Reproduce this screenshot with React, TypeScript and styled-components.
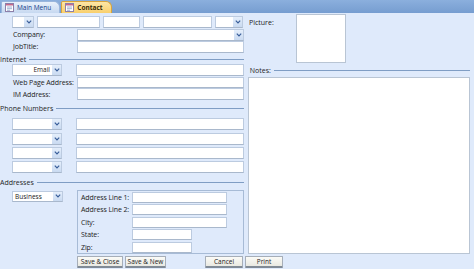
import React from "react"
import styled, {createGlobalStyle} from "styled-components"

const Global = createGlobalStyle`
html, body {
  margin     : 0;
  padding    : 0;
  background : #dfeafb;
  font-family: "Open Sans", "Noto Sans", sans-serif;
  font-size  : 7px;
  color      : #222;
}
`;

const Page = styled.div`
width      : 474px;
height     : 269px;
overflow   : hidden;
background : #dfeafb;
`;

const TabBar = styled.div`
height      : 13px;
background  : linear-gradient(#8bafdd, #769dd0);
display     : flex;
align-items : flex-end;
padding-left: 1px;
box-sizing  : border-box;
`;

const Tab = styled.div<{$active?: boolean}>`
height        : 12px;
display       : flex;
align-items   : center;
gap           : 3px;
padding       : 0 8px 0 3px;
margin-right  : 1px;
box-sizing    : border-box;
border-radius : 2px 6px 0 0;
border        : 1px solid ${p => p.$active ? "#d9a53c" : "#9ab6dc"};
border-bottom : none;
background    : ${p => p.$active ? "linear-gradient(#fde6a6, #f8cf6c)" : "linear-gradient(#e9f1fb, #c6d8f0)"};
color         : ${p => p.$active ? "#3a2c07" : "#15428b"};
font-weight   : ${p => p.$active ? 700 : 400};
font-size     : 6.5px;
`;

const Body = styled.div`
display : flex;
height  : 241px;
`;

const LeftCol = styled.div`
width          : 244px;
display        : flex;
flex-direction : column;
padding-top    : 3px;
box-sizing     : border-box;
`;

const RightCol = styled.div`
width          : 222px;
margin-left    : 4px;
display        : flex;
flex-direction : column;
`;

const Row = styled.div<{$top?: number}>`
height      : 12px;
margin-top  : ${p => p.$top ?? 0}px;
display     : flex;
align-items : stretch;
padding-left: 12px;
gap         : 3px;
`;

const Label = styled.div<{$w?: number}>`
width         : ${p => p.$w ?? 61}px;
padding-left  : 1px;
display       : flex;
align-items   : center;
white-space   : nowrap;
flex-shrink   : 0;
letter-spacing: -0.1px;
`;

const TextBox = styled.div<{$w?: number; $ml?: number}>`
${p => p.$w ? `width: ${p.$w}px;` : "flex: 1;"}
margin-left  : ${p => p.$ml ?? 0}px;
background   : #fff;
border       : 1px solid #bccbe0;
border-bottom: 1px solid #a9b8cc;
box-sizing   : border-box;
flex-shrink  : 0;
`;

const ComboBox = styled.div<{$w?: number}>`
${p => p.$w ? `width: ${p.$w}px;` : "flex: 1;"}
background   : #fff;
border       : 1px solid #bccbe0;
border-bottom: 1px solid #a9b8cc;
box-sizing   : border-box;
display      : flex;
flex-shrink  : 0;
`;

const ComboText = styled.div<{$align?: string}>`
flex            : 1;
display         : flex;
align-items     : center;
justify-content : ${p => p.$align ?? "flex-start"};
padding         : 0 2px;
font-size       : 6.5px;
`;

const ComboButton = styled.div`
width           : 9px;
background      : linear-gradient(#e4eefb, #c9daf1);
display         : flex;
align-items     : center;
justify-content : center;
`;

const SectionHeader = styled.div<{$top?: number}>`
height      : 9px;
margin-top  : ${p => p.$top ?? 0}px;
display     : flex;
align-items : center;
gap         : 3px;
white-space : nowrap;
color       : #1e1e1e;
`;

const Rule = styled.div`
flex       : 1;
height     : 1px;
background : #7f9dc4;
`;

const AddressBlock = styled.div`
margin-top  : 3px;
padding-left: 12px;
display     : flex;
height      : 65px;
`;

const AddressCombo = styled(ComboBox)`
height     : 11px;
margin-top : 1px;
width      : 50px;
`;

const GroupBox = styled.div`
margin-left    : 14px;
width          : 167px;
border         : 1px solid #a7bbd6;
box-sizing     : border-box;
display        : flex;
flex-direction : column;
padding        : 1px 0 0 2px;
gap            : 1.5px;
`;

const GroupRow = styled.div`
height  : 11px;
display : flex;
`;

const PictureRow = styled.div`
display     : flex;
height      : 51px;
padding-top : 1px;
`;

const PicLabel = styled.div`
width   : 47px;
padding : 4px 0 0 1px;
`;

const PictureBox = styled.div`
width      : 50px;
height     : 49px;
background : #fff;
border     : 1px solid #b9c5d4;
box-sizing : border-box;
`;

const NotesBox = styled.div`
flex       : 1;
margin-top : 2px;
background : #fff;
border     : 1px solid #b9c5d4;
box-sizing : border-box;
`;

const ButtonRow = styled.div`
display      : flex;
padding-left : 77px;
padding-top  : 2px;
gap          : 2px;
`;

const Button = styled.div<{$w: number; $gap?: number}>`
width           : ${p => p.$w}px;
height          : 12px;
margin-left     : ${p => p.$gap ?? 0}px;
background      : linear-gradient(#fbfbf7, #e9e9e2);
border          : 1px solid #a6aeb8;
border-bottom   : 2px solid #808a96;
border-radius   : 1px;
box-sizing      : border-box;
display         : flex;
align-items     : center;
justify-content : center;
font-size       : 6.5px;
color           : #222;
`;

const Chevron = () => (
  <svg width="6" height="4" viewBox="0 0 6 4">
    <path d="M0.8 0.6 L3 2.9 L5.2 0.6" stroke="#3a5f9a" strokeWidth="1.2" fill="none" />
  </svg>
)

const FormIcon = () => (
  <svg width="9" height="9" viewBox="0 0 9 9">
    <rect x="0.5" y="0.5" width="8" height="8" fill="#fff" stroke="#8d7fa8" />
    <rect x="1" y="1" width="7" height="1.5" fill="#c56a8c" />
    <path d="M2 4 H7 M2 5.7 H7 M2 7.3 H5" stroke="#8aa0c8" strokeWidth="0.8" />
  </svg>
)

function Combo({w, text, align}: {w?: number; text?: string; align?: string}) {
  return (
    <ComboBox $w={w}>
      <ComboText $align={align}>{text}</ComboText>
      <ComboButton><Chevron /></ComboButton>
    </ComboBox>
  )
}

export default function App() {
  const phones = [0, 1, 2, 3]
  const address = [
    {label: "Address Line 1:", w: 95},
    {label: "Address Line 2:", w: 95},
    {label: "City:",           w: 95},
    {label: "State:",          w: 60},
    {label: "Zip:",            w: 60},
  ]

  return (
    <Page>
      <Global />
      <TabBar>
        <Tab><FormIcon />Main Menu</Tab>
        <Tab $active><FormIcon />Contact</Tab>
      </TabBar>

      <Body>
        <LeftCol>
          <Row>
            <Combo w={22} />
            <TextBox $w={63} />
            <TextBox $w={37} />
            <TextBox $w={69} />
            <Combo w={28} />
          </Row>
          <Row $top={1}>
            <Label>Company:</Label>
            <Combo />
          </Row>
          <Row>
            <Label>JobTitle:</Label>
            <TextBox />
          </Row>

          <SectionHeader $top={2}>Internet<Rule /></SectionHeader>
          <Row>
            <Combo w={50} text="Email" align="flex-end" />
            <TextBox $ml={11} />
          </Row>
          <Row $top={1}>
            <Label>Web Page Address:</Label>
            <TextBox />
          </Row>
          <Row>
            <Label>IM Address:</Label>
            <TextBox />
          </Row>

          <SectionHeader $top={4}>Phone Numbers<Rule /></SectionHeader>
          {phones.map(i => (
            <Row key={i} $top={i === 0 ? 5 : 2.5}>
              <Combo w={50} />
              <TextBox $ml={11} />
            </Row>
          ))}

          <SectionHeader $top={4.5}>Addresses<Rule /></SectionHeader>
          <AddressBlock>
            <AddressCombo>
              <ComboText>Business</ComboText>
              <ComboButton><Chevron /></ComboButton>
            </AddressCombo>
            <GroupBox>
              {address.map(a => (
                <GroupRow key={a.label}>
                  <Label $w={51}>{a.label}</Label>
                  <TextBox $w={a.w} />
                </GroupRow>
              ))}
            </GroupBox>
          </AddressBlock>
        </LeftCol>

        <RightCol>
          <PictureRow>
            <PicLabel>Picture:</PicLabel>
            <PictureBox />
          </PictureRow>
          <SectionHeader $top={1}>&nbsp;Notes:<Rule /></SectionHeader>
          <NotesBox />
        </RightCol>
      </Body>

      <ButtonRow>
        <Button $w={46}>Save &amp; Close</Button>
        <Button $w={41}>Save &amp; New</Button>
        <Button $w={38} $gap={37}>Cancel</Button>
        <Button $w={38}>Print</Button>
      </ButtonRow>
    </Page>
  )
}
